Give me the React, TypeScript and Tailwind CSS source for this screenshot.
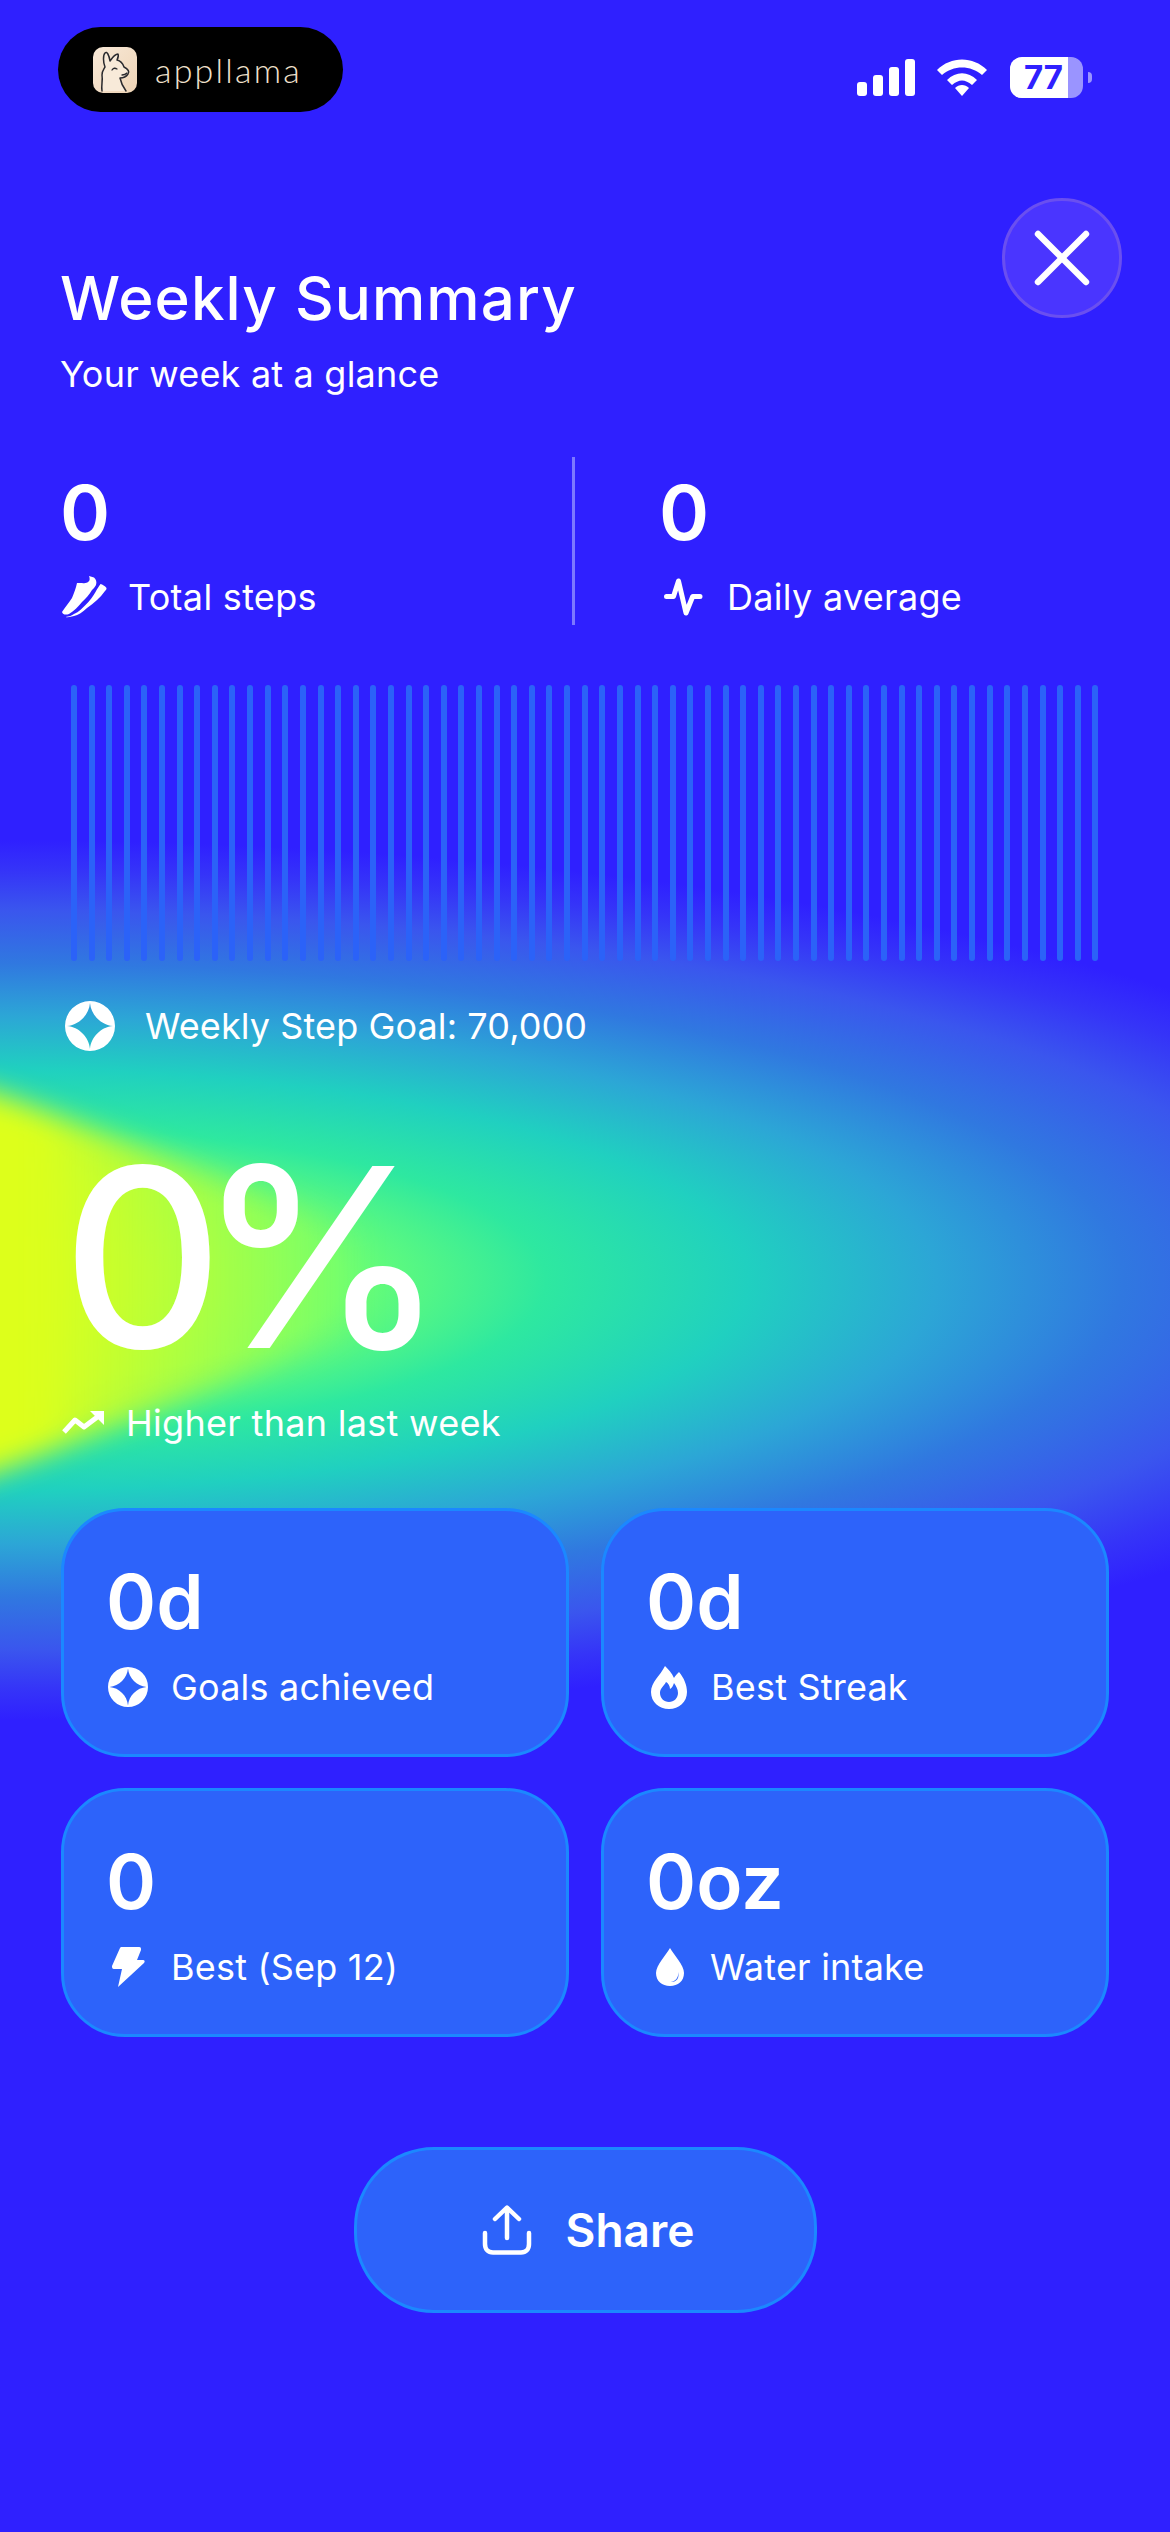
import { X } from "lucide-react";

const FONT = "font-['Inter','Liberation_Sans',sans-serif]";
const BARS = Array.from({ length: 59 }, (_, i) => i);

function SparkCircle({ className }: { className: string }) {
  return (
    <svg viewBox="0 0 50 50" className={className}>
      <path
        fill="#fff"
        fillRule="evenodd"
        d="M25 0a25 25 0 1 0 0 50a25 25 0 1 0 0-50ZM25 2C26 14 36 24 48 25C36 26 26 36 25 48C24 36 14 26 2 25C14 24 24 14 25 2Z"
      />
    </svg>
  );
}

function Shoe() {
  return (
    <svg viewBox="0 0 46 42" className="w-[46px] h-[42px] shrink-0">
      <path fill="#fff" d="M0 36C3 31 7 27 10 22C12 17 14 12 15 7L20 7C23 7.5 25 7 26 6C28 5 28 2 27 0L32 1.5C34 3 35 6 34 9C33 11 32 12 30 14C27 19 24 22 20 26C16 31 12 35 7 38C4 39 1 39 0 36Z" />
      <path fill="#fff" d="M38.5 8C40.5 8.5 43 10 44.5 12C44.5 13.5 44 14 43 15C38 22 32 27 25 32C21 36 16 39 12 40C9 41 6 41.5 3.5 41C7 40.5 10 39.5 12 38C17 36 20 32 23.5 29C28 25 31 20 33.5 16C35 13 37 10 38.5 8Z" />
    </svg>
  );
}

function Pulse() {
  return (
    <svg viewBox="0 0 40 38" className="w-[40px] h-[38px] ml-[3px] shrink-0" fill="none" stroke="#fff" strokeWidth="5" strokeLinecap="round" strokeLinejoin="round">
      <path d="M2.5 18.5H9.5L14.5 3L22 35L28.7 18.5H36" />
    </svg>
  );
}

function Flame() {
  return (
    <svg viewBox="0 0 36 43" className="w-[36px] h-[43px] ml-[5px] shrink-0">
      <path
        fill="#fff"
        fillRule="evenodd"
        d="M14 0C17 3 21 7 23 12C24 10 26 8 28 6C33 12 36 19 36 26C36 36 28 43 18 43C8 43 0 36 0 26C0 16 9 10 14 0ZM18 36C23 36 27 32 27 27C27 23 25 20 23 17C22 20 21 22 19 23C19 20 17 17 15 16C13 20 9 22 9 27C9 32 13 36 18 36Z"
      />
    </svg>
  );
}

function Bolt() {
  return (
    <svg viewBox="0 0 33 40" className="w-[33px] h-[40px] ml-[6px] shrink-0">
      <path fill="#fff" d="M8 1C8 .5 9 0 10 0H27C29 0 29 1 29 3L25 13H31C33 13 33 15 32 16L6 40L10 22H2C0 22 0 20 0 19Z" />
    </svg>
  );
}

function Drop() {
  return (
    <svg viewBox="0 0 28 38" className="w-[28px] h-[38px] ml-[10px] shrink-0">
      <path
        fill="#fff"
        fillRule="evenodd"
        d="M14 0C18 7 28 17 28 25C28 33 22 38 14 38C6 38 0 33 0 25C0 17 10 7 14 0ZM22 24C23 29 20 33 15 34C20 34.5 24 30 22 24Z"
      />
    </svg>
  );
}

function ShareIcon() {
  return (
    <svg viewBox="0 0 50 50" className="w-[50px] h-[50px]" fill="none" stroke="#fff" strokeWidth="4.5" strokeLinecap="round" strokeLinejoin="round">
      <path d="M25 33V3M13 14L25 2.5L37 14" />
      <path d="M3 28V39C3 44.5 6 47.5 11 47.5H39C44 47.5 47 44.5 47 39V28" />
    </svg>
  );
}

function Trend() {
  return (
    <svg viewBox="0 0 42 24" className="w-[42px] h-[24px] shrink-0" fill="none" stroke="#fff" strokeWidth="5" strokeLinejoin="round">
      <path d="M2 21L13 9L22 16L38 4" />
      <path fill="#fff" stroke="none" d="M28 0H42V14Z" />
    </svg>
  );
}

function Llama() {
  return (
    <svg viewBox="0 0 44 46" className="w-[44px] h-[46px]">
      <defs>
        <linearGradient id="badge" x1="0" y1="0" x2="1" y2="1">
          <stop offset="0" stopColor="#f8e9d8" />
          <stop offset="1" stopColor="#eed4b6" />
        </linearGradient>
      </defs>
      <rect width="44" height="46" rx="10" fill="url(#badge)" />
      <path
        d="M9 44C8 38 10 34 9 28C9 24 11 22 12 20C10 15 10 8 12 6C14 4 16 8 17 14C19 11 22 7 25 7C26 9 25 11 24 13C28 14 30 17 31 20C35 22 37 25 35 27C33 30 30 31 27 31C28 36 30 40 33 44"
        fill="#f8ead9"
        stroke="#2a2a2e"
        strokeWidth="1.5"
        strokeLinejoin="round"
        strokeLinecap="round"
      />
      <path d="M19 23Q21 20 24 22M29 28Q32 28 34 26" fill="none" stroke="#2a2a2e" strokeWidth="1.3" strokeLinecap="round" />
    </svg>
  );
}

function StatusIcons() {
  return (
    <div className="flex items-center mr-[16px] mt-[30px]">
      <div className="flex items-end gap-[6px] h-[37px]">
        <div className="w-[10px] h-[14px] rounded-[3px] bg-white" />
        <div className="w-[10px] h-[21px] rounded-[3px] bg-white" />
        <div className="w-[10px] h-[29px] rounded-[3px] bg-white" />
        <div className="w-[10px] h-[37px] rounded-[3px] bg-white" />
      </div>
      <svg viewBox="0 0 50 37" className="w-[50px] h-[37px] ml-[22px]">
        <path fill="#fff" d="M0 11C14 -3 36 -3 50 11L45 16C34 6 16 6 5 16Z" />
        <path fill="#fff" d="M10 21C19 12 31 12 40 21L35 26C28 20 22 20 15 26Z" />
        <path fill="#fff" d="M18 29C22 25 28 25 32 29L25 37Z" />
      </svg>
      <div className="relative ml-[23px] w-[73px] h-[41px] rounded-[12px] overflow-hidden bg-[#9a94ff] flex">
        <div className={`w-[58px] h-full bg-white flex items-center justify-end pr-[5px] text-[#2f20ff] text-[33px] font-bold leading-none ${FONT}`}>
          77
        </div>
      </div>
      <div className="ml-[5px] w-[4px] h-[11px] rounded-r-full bg-[#9a94ff]" />
    </div>
  );
}

function Stat({ value, label, icon, ml, gap }: { value: string; label: string; icon: React.ReactNode; ml: string; gap: string }) {
  return (
    <div className={`flex flex-col ${ml}`}>
      <div className="text-[76px] leading-[76px] font-semibold pt-[17px] -ml-[2px]">{value}</div>
      <div className={`flex items-center mt-[25px] text-[36px] leading-[44px] tracking-[0.3px] ${gap}`}>
        {icon}
        <span>{label}</span>
      </div>
    </div>
  );
}

function Card({ value, label, icon, gap }: { value: string; label: string; icon: React.ReactNode; gap: string }) {
  return (
    <div className="h-[249px] rounded-[64px] bg-[#2d63fa] border-[3px] border-[#1b88ff] pl-[42px] pt-[52px]">
      <div className="text-[76px] leading-[76px] font-semibold">{value}</div>
      <div className={`flex items-center mt-[26px] h-[44px] text-[36px] leading-[44px] tracking-[0.2px] ${gap}`}>
        {icon}
        <span>{label}</span>
      </div>
    </div>
  );
}

export default function App() {
  return (
    <div className={`relative w-[1170px] h-[2532px] overflow-hidden bg-[#2f20ff] text-white ${FONT}`}>
      {/* colour glow behind the percentage */}
      <div className="absolute inset-0 bg-[radial-gradient(ellipse_1560px_440px_at_0px_1280px,#90ff58_0%,#6cff74_22%,#2ee8a0_35%,#20d0c0_48%,#2ca6d6_60%,#3078e0_72%,#3a56ee_84%,#3534f8_93%,#2f20ff_100%)]" />
      <div className="absolute -left-[100px] top-0 w-[1270px] h-[2532px] blur-[14px]">
        <div className="w-full h-full bg-[linear-gradient(90deg,#e0ff18_0px,#dcff1c_140px,rgba(190,255,40,0)_470px)] [clip-path:polygon(0px_1066px,100px_1095px,600px_1280px,100px_1470px,0px_1506px)]" />
      </div>

      <div className="relative flex flex-col px-[62px]">
        <div className="flex justify-between items-start pt-[27px]">
          <div className="flex items-center -ml-[4px] w-[285px] h-[85px] rounded-full bg-black pl-[35px]">
            <Llama />
            <span className="ml-[18px] text-[#f0e0cc] text-[34px] leading-none font-light font-['Lato',sans-serif] tracking-[2.2px]">appllama</span>
          </div>
          <StatusIcons />
        </div>

        <div className="flex justify-between items-start mt-[86px]">
          <div className="pt-[64px] -ml-[2px]">
            <h1 className="text-[60px] leading-[72px] font-medium tracking-[1.1px]">Weekly Summary</h1>
            <p className="text-[36px] leading-[44px] mt-[18px] tracking-[0.2px]">Your week at a glance</p>
          </div>
          <button className="w-[120px] h-[120px] -mr-[14px] rounded-full bg-[#4a35ff] border-[3px] border-[#6a4ff0] flex items-center justify-center">
            <X size={96} strokeWidth={1.6} color="#fff" />
          </button>
        </div>

        <div className="flex mt-[61px] h-[168px]">
          <Stat value="0" label="Total steps" icon={<Shoe />} ml="w-[510px]" gap="gap-[20px]" />
          <div className="w-[3px] h-[168px] bg-[#7c78ff]" />
          <Stat value="0" label="Daily average" icon={<Pulse />} ml="ml-[86px]" gap="gap-[23px]" />
        </div>

        <div className="flex justify-between ml-[9px] mr-[9px] mt-[60px] h-[276px]">
          {BARS.map((b) => (
            <div key={b} className="w-[6px] h-full rounded-full bg-[#2b62f8]" />
          ))}
        </div>

        <div className="flex items-center gap-[30px] mt-[40px] ml-[3px] text-[36px] leading-[50px] tracking-[0.1px]">
          <SparkCircle className="w-[50px] h-[50px] shrink-0" />
          <span>Weekly Step Goal: 70,000</span>
        </div>

        <div className="text-[250px] leading-[258px] font-medium mt-[77px] tracking-[-26px]">0%</div>

        <div className="flex items-center gap-[22px] mt-[15px] text-[36px] leading-[44px] tracking-[0.3px]">
          <Trend />
          <span>Higher than last week</span>
        </div>

        <div className="grid grid-cols-2 gap-x-[32px] gap-y-[31px] mt-[63px] -ml-[1px] -mr-[1px]">
          <Card value="0d" label="Goals achieved" icon={<SparkCircle className="w-[40px] h-[40px] ml-[2px] shrink-0" />} gap="gap-[23px]" />
          <Card value="0d" label="Best Streak" icon={<Flame />} gap="gap-[24px]" />
          <Card value="0" label="Best (Sep 12)" icon={<Bolt />} gap="gap-[26px]" />
          <Card value="0oz" label="Water intake" icon={<Drop />} gap="gap-[26px]" />
        </div>

        <button className="self-center mt-[110px] ml-[1px] w-[463px] h-[166px] rounded-[80px] bg-[#2d63fa] border-[3px] border-[#1b88ff] flex items-center justify-center gap-[34px] pl-[5px]">
          <ShareIcon />
          <span className="text-[46px] font-semibold leading-none">Share</span>
        </button>
      </div>
    </div>
  );
}
